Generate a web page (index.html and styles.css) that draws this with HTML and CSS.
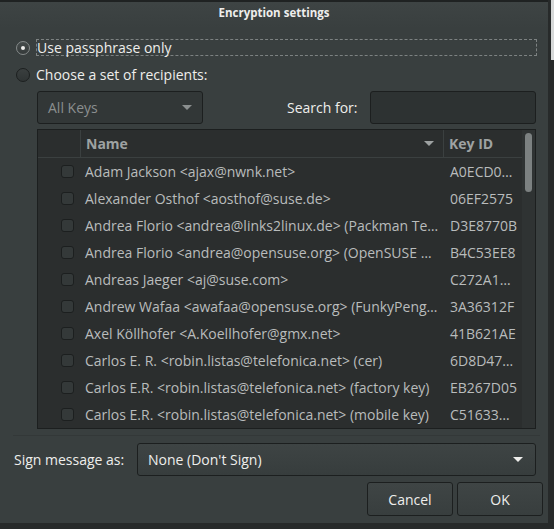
FILE: index.html
```html
<!DOCTYPE html>
<html>
<head>
<meta charset="utf-8">
<link rel="stylesheet" href="styles.css">
</head>
<body>
<div class="desktop">
  <div class="dialog">
    <div class="titlebar">Encryption settings</div>
    <div class="content">
      <div class="radio-row first">
        <span class="radio checked"></span>
        <span class="radio-label focused">Use passphrase only</span>
      </div>
      <div class="radio-row second">
        <span class="radio"></span>
        <span class="radio-label">Choose a set of recipients:</span>
      </div>

      <div class="recipients">
        <div class="filter-row">
          <div class="combo dim">
            <span>All Keys</span>
            <span class="caret"></span>
          </div>
          <span class="search-label">Search for:</span>
          <div class="entry"></div>
        </div>

        <div class="table">
          <div class="table-main">
            <div class="thead">
              <div class="th check-col"></div>
              <div class="th name-col">Name <span class="caret sort"></span></div>
              <div class="th key-col">Key ID</div>
            </div>
            <div class="tbody">
              <div class="tr"><div class="td check-col"><span class="checkbox"></span></div><div class="td name-col">Adam Jackson &lt;ajax@nwnk.net&gt;</div><div class="td key-col">A0ECD0…</div></div>
              <div class="tr"><div class="td check-col"><span class="checkbox"></span></div><div class="td name-col">Alexander Osthof &lt;aosthof@suse.de&gt;</div><div class="td key-col">06EF2575</div></div>
              <div class="tr"><div class="td check-col"><span class="checkbox"></span></div><div class="td name-col">Andrea Florio &lt;andrea@links2linux.de&gt; (Packman Te…</div><div class="td key-col">D3E8770B</div></div>
              <div class="tr"><div class="td check-col"><span class="checkbox"></span></div><div class="td name-col">Andrea Florio &lt;andrea@opensuse.org&gt; (OpenSUSE …</div><div class="td key-col">B4C53EE8</div></div>
              <div class="tr"><div class="td check-col"><span class="checkbox"></span></div><div class="td name-col">Andreas Jaeger &lt;aj@suse.com&gt;</div><div class="td key-col">C272A1…</div></div>
              <div class="tr"><div class="td check-col"><span class="checkbox"></span></div><div class="td name-col">Andrew Wafaa &lt;awafaa@opensuse.org&gt; (FunkyPeng…</div><div class="td key-col">3A36312F</div></div>
              <div class="tr"><div class="td check-col"><span class="checkbox"></span></div><div class="td name-col">Axel Köllhofer &lt;A.Koellhofer@gmx.net&gt;</div><div class="td key-col">41B621AE</div></div>
              <div class="tr"><div class="td check-col"><span class="checkbox"></span></div><div class="td name-col">Carlos E. R. &lt;robin.listas@telefonica.net&gt; (cer)</div><div class="td key-col">6D8D47…</div></div>
              <div class="tr"><div class="td check-col"><span class="checkbox"></span></div><div class="td name-col">Carlos E.R. &lt;robin.listas@telefonica.net&gt; (factory key)</div><div class="td key-col">EB267D05</div></div>
              <div class="tr"><div class="td check-col"><span class="checkbox"></span></div><div class="td name-col">Carlos E.R. &lt;robin.listas@telefonica.net&gt; (mobile key)</div><div class="td key-col">C51633…</div></div>
            </div>
          </div>
          <div class="scrollbar"><div class="thumb"></div></div>
        </div>
      </div>

      <div class="separator"></div>

      <div class="sign-row">
        <span class="sign-label">Sign message as:</span>
        <div class="combo sign">
          <span>None (Don't Sign)</span>
          <span class="caret light"></span>
        </div>
      </div>

      <div class="buttons">
        <button class="btn">Cancel</button>
        <button class="btn">OK</button>
      </div>
    </div>
  </div>
  <div class="otherwin"></div>
</div>
</body>
</html>
```

FILE: styles.css
```css
html, body {
  margin: 0;
  padding: 0;
}
body {
  background: #272a2a;
  font-family: "Open Sans", "Noto Sans", sans-serif;
  font-size: 14px;
  color: #eeeeec;
  width: 554px;
  height: 529px;
  overflow: hidden;
}
.desktop {
  position: relative;
  width: 554px;
  height: 529px;
}
.otherwin {
  position: absolute;
  left: 551px;
  top: 0;
  width: 3px;
  height: 60px;
  background: #d6d8d8;
}
.dialog {
  width: 548px;
  height: 523px;
  box-sizing: border-box;
  background: #393f3f;
  border-top: 2px solid #1f2222;
  display: flex;
  flex-direction: column;
}
.titlebar {
  height: 26px;
  line-height: 22px;
  text-align: center;
  font-weight: bold;
  font-size: 11.5px;
  color: #eeeeec;
  background: linear-gradient(#3e4444, #393f3f);
}
.content {
  display: flex;
  flex-direction: column;
  padding: 0 5px 0 14px;
}
.radio-row {
  display: flex;
  align-items: center;
  height: 17px;
}
.radio-row.first { margin-top: 11px; }
.radio-row.second { margin-top: 10px; }
.radio {
  width: 14px;
  height: 14px;
  border-radius: 50%;
  margin-left: 2px;
  margin-right: 6px;
  box-sizing: border-box;
  border: 1px solid #1c1f1f;
  background: linear-gradient(#3a3f3f, #2f3434);
  position: relative;
  flex: none;
}
.radio.checked {
  border-color: #858a8a;
  background: linear-gradient(#454b4b, #353a3a);
}
.radio.checked::after {
  content: "";
  position: absolute;
  left: 4px;
  top: 4px;
  width: 4px;
  height: 4px;
  border-radius: 50%;
  background: #eeeeec;
}
.radio-label {
  line-height: 15px;
}
.radio-label.focused {
  flex: 1;
  margin-right: 6px;
  border: 1px dashed #7d8282;
}
.recipients {
  margin-left: 23px;
  margin-right: 7px;
  display: flex;
  flex-direction: column;
}
.filter-row {
  margin-top: 8px;
  display: flex;
  align-items: center;
  height: 33px;
}
.combo {
  box-sizing: border-box;
  height: 33px;
  border: 1px solid #1c1f1f;
  border-radius: 3px;
  display: flex;
  align-items: center;
  justify-content: space-between;
  padding: 0 10px 0 10px;
}
.combo.dim {
  width: 166px;
  background: #323737;
  color: #8b8f8f;
}
.caret {
  width: 0;
  height: 0;
  border-left: 5px solid transparent;
  border-right: 5px solid transparent;
  border-top: 5px solid #8b8f8f;
}
.caret.light {
  border-top-color: #eeeeec;
}
.search-label {
  margin-left: 84px;
  margin-right: 12px;
}
.entry {
  flex: 1;
  height: 33px;
  box-sizing: border-box;
  border: 1px solid #1c1f1f;
  border-radius: 3px;
  background: #2d3232;
}
.table {
  margin-top: 5px;
  height: 300px;
  box-sizing: border-box;
  border: 1px solid #1c1f1f;
  background: #2b2e2e;
  display: flex;
}
.table-main {
  flex: 1;
  display: flex;
  flex-direction: column;
  min-width: 0;
}
.thead {
  height: 27px;
  display: flex;
  border-bottom: 1px solid #3b4040;
}
.th {
  display: flex;
  align-items: center;
  font-weight: bold;
  color: #9ea2a2;
  box-sizing: border-box;
}
.check-col { width: 43px; flex: none; }
.name-col {
  width: 363px;
  flex: none;
  padding-left: 5px;
  box-sizing: border-box;
}
.key-col {
  flex: 1;
  padding-left: 5px;
  box-sizing: border-box;
}
.th.check-col, .th.name-col {
  border-right: 1px solid #3b4040;
}
.th.name-col {
  justify-content: space-between;
  padding-right: 9px;
}
.caret.sort {
  border-top-color: #9ea2a2;
}
.tbody {
  display: flex;
  flex-direction: column;
}
.tr {
  height: 27px;
  display: flex;
  align-items: center;
  color: #b9bcbc;
}
.td {
  white-space: nowrap;
  overflow: hidden;
}
.td.check-col {
  display: flex;
  align-items: center;
  padding-left: 23px;
  box-sizing: border-box;
}
.checkbox {
  width: 13px;
  height: 13px;
  box-sizing: border-box;
  border: 1px solid #1c1f1f;
  border-radius: 3px;
  background: #343939;
}
.td.name-col { padding-left: 4px; }
.td.key-col { padding-left: 6px; }
.scrollbar {
  width: 13px;
  flex: none;
  background: #2f3333;
  position: relative;
  padding-top: 3px;
  box-sizing: border-box;
}
.thumb {
  margin-left: 3px;
  width: 7px;
  height: 59px;
  border-radius: 4px;
  background: #7c8181;
}
.separator {
  margin-top: 6px;
  margin-left: -1px;
  margin-right: 3px;
  height: 1px;
  background: #333838;
}
.sign-row {
  margin-top: 7px;
  display: flex;
  align-items: center;
  height: 33px;
}
.sign-label {
  width: 123px;
  flex: none;
}
.combo.sign {
  width: 399px;
  background: linear-gradient(#3e4444, #373d3d);
  color: #eeeeec;
  padding-right: 12px;
}
.buttons {
  margin-top: 6px;
  display: flex;
  justify-content: flex-end;
  gap: 4px;
}
.btn {
  width: 86px;
  height: 34px;
  box-sizing: border-box;
  border: 1px solid #1c1f1f;
  border-radius: 3px;
  background: linear-gradient(#3f4545, #383e3e);
  color: #eeeeec;
  font-family: "Open Sans", "Noto Sans", sans-serif;
  font-size: 14px;
  padding: 0;
}
```
